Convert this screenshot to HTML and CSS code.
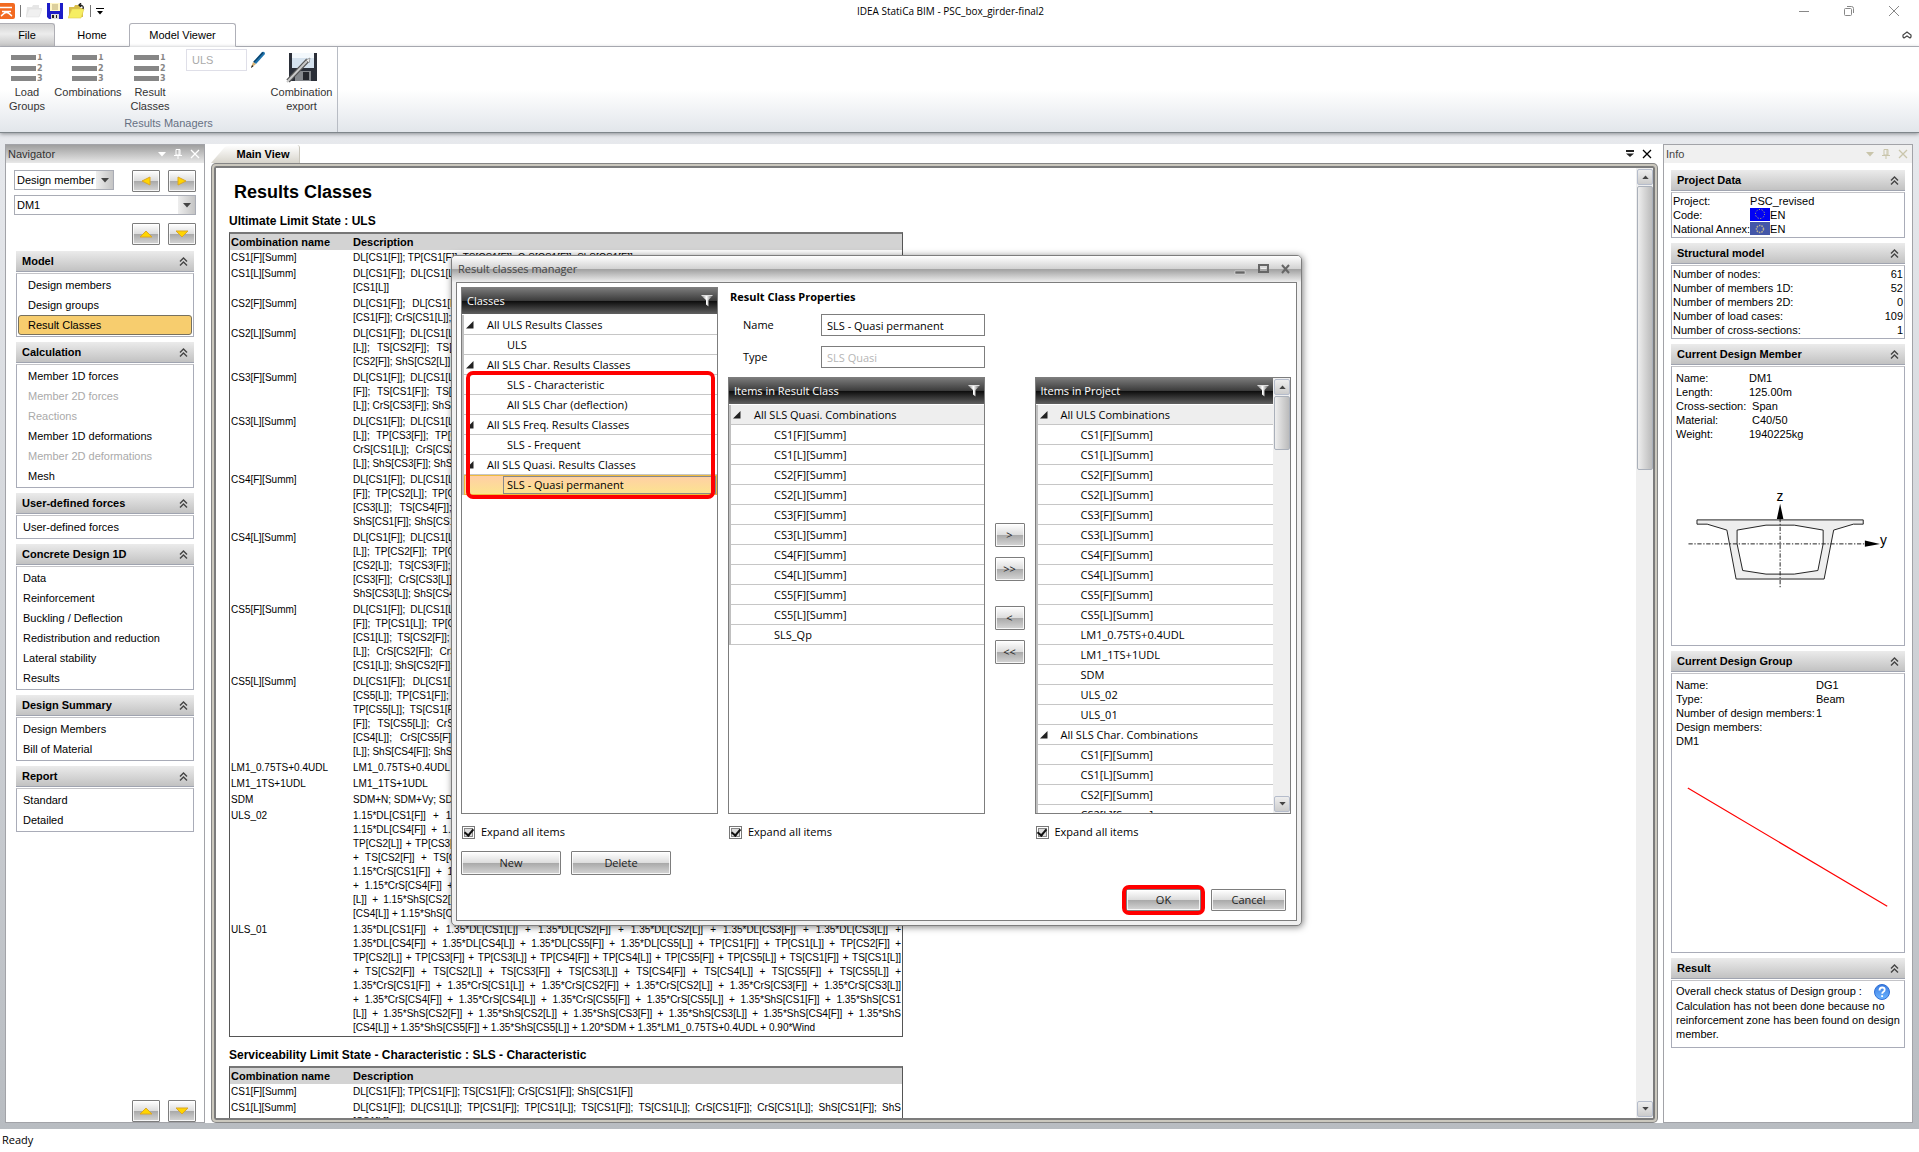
FILE: index.html
```html
<!DOCTYPE html>
<html lang="en">
<head>
  <meta charset="UTF-8" />
  <meta name="viewport" content="width=device-width, initial-scale=1.0"/>
  <title>IDEA StatiCa BIM - PSC_box_girder-final2</title>
  <link rel="stylesheet" href="styles.css">
</head>
<body>

  <!-- shared icons -->
  <svg class="defs" width="0" height="0" aria-hidden="true">
    <defs>
      <linearGradient id="funnel-fill" x1="0" x2="1" y1="0" y2="0">
        <stop offset="0" stop-color="#777"/><stop offset=".45" stop-color="#fff"/><stop offset="1" stop-color="#555"/>
      </linearGradient>
      <linearGradient id="help-fill" x1="0" x2="0" y1="0" y2="1">
        <stop offset="0" stop-color="#3a7be0"/><stop offset="1" stop-color="#6db4ff"/>
      </linearGradient>
    </defs>
    <symbol id="chevrons" viewBox="0 0 9 9"><path d="M1 4.5 4.5 1 8 4.5M1 8.5 4.5 5 8 8.5" fill="none" stroke="#444" stroke-width="1.4"/></symbol>
    <symbol id="funnel" viewBox="0 0 12 12"><path d="M0 .5h12L7.5 5v6.5L5 9.500V5z" fill="url(#funnel-fill)"/><path d="M.5.5h11" stroke="#ddd"/></symbol>
    <symbol id="node" viewBox="0 0 8 8"><path d="M7.500 0v7.500H0z" fill="#222"/></symbol>
    <symbol id="down" viewBox="0 0 8 5"><path d="M0 0h8L4 4.500z" fill="currentColor"/></symbol>
    <symbol id="up" viewBox="0 0 8 5"><path d="M0 5h8L4 .5z" fill="currentColor"/></symbol>
    <symbol id="pin" viewBox="0 0 8 10"><path d="M2 .5h4V6H2zM0 6.500h8M4 7v3M5 1v5" fill="none" stroke="currentColor"/></symbol>
    <symbol id="cross" viewBox="0 0 10 10"><path d="M1 1l8 8M9 1l-8 8" fill="none" stroke="currentColor" stroke-width="1.300"/></symbol>
    <symbol id="gold-left" viewBox="0 0 14 12"><path d="M11 2v8L3 6z" fill="#ffd500" stroke="#dba626"/></symbol>
    <symbol id="gold-right" viewBox="0 0 14 12"><path d="M3 2v8l8-4z" fill="#ffd500" stroke="#dba626"/></symbol>
    <symbol id="gold-up" viewBox="0 0 14 12"><path d="M1 9h12L7 3z" fill="#ffd500" stroke="#dba626"/></symbol>
    <symbol id="gold-down" viewBox="0 0 14 12"><path d="M1 3h12L7 9z" fill="#ffd500" stroke="#dba626"/></symbol>
    <symbol id="bars" viewBox="0 0 32 28"><path d="M0 1h25v5H0zM0 12h25v5H0zM0 22h25v5H0z" fill="#868686"/></symbol>
  </svg>

  <header class="titlebar">
    <div class="quick">
      <svg width="15" height="16" viewBox="0 0 15 16"><path d="M0 0h13q2 0 2 2v12q0 2-2 2H0z" fill="#f26a21"/><path d="M0 4.500h12M1 13c2-1 2.500-3.500 5.500-3.500s3.500 2.500 5.500 3.500M2 8.500h9" fill="none" stroke="#fff" stroke-width="1.600"/></svg>
      <span class="sep"></span>
      <svg width="16" height="16" viewBox="0 0 16 16"><path d="M1 4h5l1-2h6v3h3l-3 9H0z" fill="#e6e6e6"/><path d="M3 6h13l-3 8H0z" fill="#f0f0f0" stroke="#ddd" stroke-width=".5"/></svg>
      <svg width="16" height="16" viewBox="0 0 16 16"><path d="M0 0h16v16H2l-2-2z" fill="#1c1cc8"/><path d="M3 0h10v8H3z" fill="#fff6c8"/><path d="M5 2h6M5 4h6M5 6h6" stroke="#b9a870"/><path d="M4 11h8v5H4z" fill="#ddd"/><path d="M5 12h2v3H5z" fill="#222"/><path d="M9 12h1v3H9z" fill="#222"/></svg>
      <svg width="17" height="16" viewBox="0 0 17 16"><path d="M1 4h5l1-2h5v3h3v9H1z" fill="#d8bd4a"/><path d="M4 6h12l-3 9H0z" fill="#f6ee62" stroke="#e0cc50" stroke-width=".6"/><path d="M15 6c1-3-1-4-4-4M13 0l-2 2 2 2" fill="none" stroke="#222" stroke-width="1.300"/></svg>
      <span class="sep"></span>
      <svg width="8" height="7" viewBox="0 0 8 7"><path d="M0 .5h8" stroke="#000"/><path d="M1 3h6L4 6.500z"/></svg>
    </div>
    <div class="app-title">IDEA StatiCa BIM - PSC_box_girder-final2</div>
    <div class="win-buttons">
      <button aria-label="Minimize"><svg width="10" height="10"><path d="M0 5.500h10" stroke="#888"/></svg></button>
      <button aria-label="Restore"><svg width="10" height="10" fill="none" stroke="#888"><rect x=".5" y="2.500" width="7" height="7" rx="1"/><path d="M3 .5h4.500q2 0 2 2V7"/></svg></button>
      <button aria-label="Close"><svg width="10" height="10"><path d="M0 0l10 10M10 0L0 10" stroke="#888"/></svg></button>
    </div>
  </header>

  <nav class="tabs">
    <button class="tab file">File</button>
    <button class="tab home">Home</button>
    <button class="tab active">Model Viewer</button>
    <button class="collapse" aria-label="Collapse ribbon"><svg width="10" height="8" viewBox="0 0 10 8"><path d="M1 6V4l4-3 4 3v2L8 7 5 5 2 7z" fill="none" stroke="#444" stroke-width="1.200"/></svg></button>
  </nav>

  <section class="ribbon">
    <div class="group">
      <div class="group-items">
        <button class="tool tool-load"><svg width="32" height="28"><use href="#bars"/><g class="digits"><text x="26" y="6">1</text><text x="26" y="17">2</text><text x="26" y="27">3</text></g></svg>Load<br>Groups</button>
        <button class="tool tool-comb"><svg width="32" height="28"><use href="#bars"/><g class="digits"><text x="26" y="6">1</text><text x="26" y="17">2</text><text x="26" y="27">3</text></g></svg>Combinations</button>
        <button class="tool tool-result"><svg width="32" height="28"><use href="#bars"/><g class="digits"><text x="26" y="6">1</text><text x="26" y="17">2</text><text x="26" y="27">3</text></g></svg>Result<br>Classes</button>
        <input class="class-name" type="text" value="ULS" aria-label="Result class" disabled>
        <svg class="pencil" width="16" height="18" viewBox="0 0 16 18"><path d="M3 11 12 1q3-1 3 2L6 13z" fill="#1f74ad"/><path d="M4 11 13 1.500" stroke="#0d3f66" stroke-width="1.200"/><path d="M3 11l3 2-5 4z" fill="#d8b070"/><path d="M1 17l1-3 1.500 1.200z" fill="#222"/></svg>
        <button class="tool tool-export"><svg width="32" height="32" viewBox="0 0 32 32"><path d="M3 1h28v28H5l-2-2z" fill="#2b2f38"/><path d="M6 1h22v15H6z" fill="#d5e2ee"/><path d="M6 1h22v5H6z" fill="#f3f8fc"/><path d="M9 19h16v10H9z" fill="#85888c"/><path d="M17 20h6v8h-6z" fill="#25272c"/><path d="M2 29 22 8" stroke="#555" stroke-width="4.500"/><path d="M1 30 21 9" stroke="#c9c9c9" stroke-width="2"/><path d="M20 8l4-2-1 5z" fill="#eee" stroke="#777" stroke-width=".6"/></svg>Combination<br>export</button>
      </div>
      <div class="group-name">Results Managers</div>
    </div>
  </section>

  <main class="workspace">
    <aside class="panel navigator">
      <div class="panel-title">Navigator
        <span class="panel-icons"><svg width="8" height="5"><use href="#down"/></svg><svg width="8" height="10"><use href="#pin"/></svg><svg width="10" height="10"><use href="#cross"/></svg></span>
      </div>
      <div class="nav-controls">
        <div class="nav-line">
          <span class="combo combo-kind"><select aria-label="Item kind"><option>Design member</option></select><svg width="8" height="5"><use href="#down"/></svg></span>
          <button class="arrow" aria-label="Previous"><svg width="14" height="12"><use href="#gold-left"/></svg></button>
          <button class="arrow" aria-label="Next"><svg width="14" height="12"><use href="#gold-right"/></svg></button>
        </div>
        <span class="combo"><select aria-label="Design member"><option>DM1</option></select><svg width="8" height="5"><use href="#down"/></svg></span>
        <div class="nav-line">
          <button class="arrow" aria-label="Up"><svg width="14" height="12"><use href="#gold-up"/></svg></button>
          <button class="arrow" aria-label="Down"><svg width="14" height="12"><use href="#gold-down"/></svg></button>
        </div>
      </div>
      <div class="sections">
        <section class="section">
          <h2>Model <svg width="9" height="9"><use href="#chevrons"/></svg></h2>
          <div class="box links deep"><a href="#">Design members</a><a href="#">Design groups</a><a href="#" class="current">Result Classes</a></div>
        </section>
        <section class="section">
          <h2>Calculation <svg width="9" height="9"><use href="#chevrons"/></svg></h2>
          <div class="box links deep"><a href="#">Member 1D forces</a><a href="#" class="off">Member 2D forces</a><a href="#" class="off">Reactions</a><a href="#">Member 1D deformations</a><a href="#" class="off">Member 2D deformations</a><a href="#">Mesh</a></div>
        </section>
        <section class="section">
          <h2>User-defined forces <svg width="9" height="9"><use href="#chevrons"/></svg></h2>
          <div class="box links"><a href="#">User-defined forces</a></div>
        </section>
        <section class="section">
          <h2>Concrete Design 1D <svg width="9" height="9"><use href="#chevrons"/></svg></h2>
          <div class="box links"><a href="#">Data</a><a href="#">Reinforcement</a><a href="#">Buckling / Deflection</a><a href="#">Redistribution and reduction</a><a href="#">Lateral stability</a><a href="#">Results</a></div>
        </section>
        <section class="section">
          <h2>Design Summary <svg width="9" height="9"><use href="#chevrons"/></svg></h2>
          <div class="box links"><a href="#">Design Members</a><a href="#">Bill of Material</a></div>
        </section>
        <section class="section">
          <h2>Report <svg width="9" height="9"><use href="#chevrons"/></svg></h2>
          <div class="box links"><a href="#">Standard</a><a href="#">Detailed</a></div>
        </section>
      </div>
      <div class="nav-line nav-foot">
        <button class="arrow" aria-label="Scroll up"><svg width="14" height="12"><use href="#gold-up"/></svg></button>
        <button class="arrow" aria-label="Scroll down"><svg width="14" height="12"><use href="#gold-down"/></svg></button>
      </div>
    </aside>

    <div class="view">
      <div class="view-tabs">
        <button class="view-tab">Main View</button>
        <span class="view-icons"><svg width="8" height="7" viewBox="0 0 8 7"><path d="M0 1h8" stroke="#222" stroke-width="2"/><path d="M0 3.500h8L4 7z" fill="#222"/></svg><svg width="10" height="10"><use href="#cross"/></svg></span>
      </div>
      <div class="frame">
        <article class="report">
          <h1>Results Classes</h1>
          <h3>Ultimate Limit State : ULS</h3>
          <table>
            <thead><tr><th>Combination name</th><th>Description</th></tr></thead>
            <tbody>
              <tr><td>CS1[F][Summ]</td><td><span>DL[CS1[F]]; TP[CS1[F]]; TS[CS1[F]]; CrS[CS1[F]]; ShS[CS1[F]]</span></td></tr>
              <tr><td>CS1[L][Summ]</td><td><span>DL[CS1[F]]; DL[CS1[L]]; TP[CS1[F]]; TP[CS1[L]]; TS[CS1[F]]; TS[CS1[L]]; CrS[CS1[F]]; CrS[CS1[L]]; ShS[CS1[F]]; ShS</span><span>[CS1[L]]</span></td></tr>
              <tr><td>CS2[F][Summ]</td><td><span>DL[CS1[F]]; DL[CS1[L]]; DL[CS2[F]]; TP[CS1[F]]; TP[CS1[L]]; TP[CS2[F]]; TS[CS1[F]]; TS[CS1[L]]; TS[CS2[F]]; CrS</span><span>[CS1[F]]; CrS[CS1[L]]; CrS[CS2[F]]; ShS[CS1[F]]; ShS[CS1[L]]; ShS[CS2[F]]</span></td></tr>
              <tr><td>CS2[L][Summ]</td><td><span>DL[CS1[F]]; DL[CS1[L]]; DL[CS2[F]]; DL[CS2[L]]; TP[CS1[F]]; TP[CS1[L]]; TP[CS2[F]]; TP[CS2[L]]; TS[CS1[F]]; TS[CS1</span><span>[L]]; TS[CS2[F]]; TS[CS2[L]]; CrS[CS1[F]]; CrS[CS1[L]]; CrS[CS2[F]]; CrS[CS2[L]]; ShS[CS1[F]]; ShS[CS1[L]]; ShS</span><span>[CS2[F]]; ShS[CS2[L]]</span></td></tr>
              <tr><td>CS3[F][Summ]</td><td><span>DL[CS1[F]]; DL[CS1[L]]; DL[CS2[F]]; DL[CS2[L]]; DL[CS3[F]]; TP[CS1[F]]; TP[CS1[L]]; TP[CS2[F]]; TP[CS2[L]]; TP[CS3</span><span>[F]]; TS[CS1[F]]; TS[CS1[L]]; TS[CS2[F]]; TS[CS2[L]]; TS[CS3[F]]; CrS[CS1[F]]; CrS[CS1[L]]; CrS[CS2[F]]; CrS[CS2</span><span>[L]]; CrS[CS3[F]]; ShS[CS1[F]]; ShS[CS1[L]]; ShS[CS2[F]]; ShS[CS2[L]]; ShS[CS3[F]]</span></td></tr>
              <tr><td>CS3[L][Summ]</td><td><span>DL[CS1[F]]; DL[CS1[L]]; DL[CS2[F]]; DL[CS2[L]]; DL[CS3[F]]; DL[CS3[L]]; TP[CS1[F]]; TP[CS1[L]]; TP[CS2[F]]; TP[CS2</span><span>[L]]; TP[CS3[F]]; TP[CS3[L]]; TS[CS1[F]]; TS[CS1[L]]; TS[CS2[F]]; TS[CS2[L]]; TS[CS3[F]]; TS[CS3[L]]; CrS[CS1[F]];</span><span>CrS[CS1[L]]; CrS[CS2[F]]; CrS[CS2[L]]; CrS[CS3[F]]; CrS[CS3[L]]; ShS[CS1[F]]; ShS[CS1[L]]; ShS[CS2[F]]; ShS[CS2</span><span>[L]]; ShS[CS3[F]]; ShS[CS3[L]]</span></td></tr>
              <tr><td>CS4[F][Summ]</td><td><span>DL[CS1[F]]; DL[CS1[L]]; DL[CS2[F]]; DL[CS2[L]]; DL[CS3[F]]; DL[CS3[L]]; DL[CS4[F]]; TP[CS1[F]]; TP[CS1[L]]; TP[CS2</span><span>[F]]; TP[CS2[L]]; TP[CS3[F]]; TP[CS3[L]]; TP[CS4[F]]; TS[CS1[F]]; TS[CS1[L]]; TS[CS2[F]]; TS[CS2[L]]; TS[CS3[F]]; TS</span><span>[CS3[L]]; TS[CS4[F]]; CrS[CS1[F]]; CrS[CS1[L]]; CrS[CS2[F]]; CrS[CS2[L]]; CrS[CS3[F]]; CrS[CS3[L]]; CrS[CS4[F]];</span><span>ShS[CS1[F]]; ShS[CS1[L]]; ShS[CS2[F]]; ShS[CS2[L]]; ShS[CS3[F]]; ShS[CS4[F]]</span></td></tr>
              <tr><td>CS4[L][Summ]</td><td><span>DL[CS1[F]]; DL[CS1[L]]; DL[CS2[F]]; DL[CS2[L]]; DL[CS3[F]]; DL[CS3[L]]; DL[CS4[F]]; DL[CS4[L]]; TP[CS1[F]]; TP[CS1</span><span>[L]]; TP[CS2[F]]; TP[CS2[L]]; TP[CS3[F]]; TP[CS3[L]]; TP[CS4[F]]; TP[CS4[L]]; TS[CS1[F]]; TS[CS1[L]]; TS[CS2[F]]; TS</span><span>[CS2[L]]; TS[CS3[F]]; TS[CS3[L]]; TS[CS4[F]]; TS[CS4[L]]; CrS[CS1[F]]; CrS[CS1[L]]; CrS[CS2[F]]; CrS[CS2[L]]; CrS</span><span>[CS3[F]]; CrS[CS3[L]]; CrS[CS4[F]]; CrS[CS4[L]]; ShS[CS1[F]]; ShS[CS1[L]]; ShS[CS2[F]]; ShS[CS2[L]]; ShS[CS3[F]];</span><span>ShS[CS3[L]]; ShS[CS4[F]]; ShS[CS4[L]]</span></td></tr>
              <tr><td>CS5[F][Summ]</td><td><span>DL[CS1[F]]; DL[CS1[L]]; DL[CS2[F]]; DL[CS2[L]]; DL[CS3[F]]; DL[CS3[L]]; DL[CS4[F]]; DL[CS4[L]]; DL[CS5[F]]; TP[CS1</span><span>[F]]; TP[CS1[L]]; TP[CS2[F]]; TP[CS2[L]]; TP[CS3[F]]; TP[CS3[L]]; TP[CS4[F]]; TP[CS4[L]]; TP[CS5[F]]; TS[CS1[F]]; TS</span><span>[CS1[L]]; TS[CS2[F]]; TS[CS2[L]]; TS[CS3[F]]; TS[CS3[L]]; TS[CS4[F]]; TS[CS4[L]]; TS[CS5[F]]; CrS[CS1[F]]; CrS[CS1</span><span>[L]]; CrS[CS2[F]]; CrS[CS2[L]]; CrS[CS3[F]]; CrS[CS3[L]]; CrS[CS4[F]]; CrS[CS4[L]]; CrS[CS5[F]]; ShS[CS1[F]]; ShS</span><span>[CS1[L]]; ShS[CS2[F]]; ShS[CS2[L]]; ShS[CS3[F]]; ShS[CS4[F]]; ShS[CS5[F]]</span></td></tr>
              <tr><td>CS5[L][Summ]</td><td><span>DL[CS1[F]]; DL[CS1[L]]; DL[CS2[F]]; DL[CS2[L]]; DL[CS3[F]]; DL[CS3[L]]; DL[CS4[F]]; DL[CS4[L]]; DL[CS5[F]]; DL</span><span>[CS5[L]]; TP[CS1[F]]; TP[CS1[L]]; TP[CS2[F]]; TP[CS2[L]]; TP[CS3[F]]; TP[CS3[L]]; TP[CS4[F]]; TP[CS4[L]]; TP[CS5[F]];</span><span>TP[CS5[L]]; TS[CS1[F]]; TS[CS1[L]]; TS[CS2[F]]; TS[CS2[L]]; TS[CS3[F]]; TS[CS3[L]]; TS[CS4[F]]; TS[CS4[L]]; TS[CS5</span><span>[F]]; TS[CS5[L]]; CrS[CS1[F]]; CrS[CS1[L]]; CrS[CS2[F]]; CrS[CS2[L]]; CrS[CS3[F]]; CrS[CS3[L]]; CrS[CS4[F]]; CrS</span><span>[CS4[L]]; CrS[CS5[F]]; CrS[CS5[L]]; ShS[CS1[F]]; ShS[CS1[L]]; ShS[CS2[F]]; ShS[CS2[L]]; ShS[CS3[F]]; ShS[CS3</span><span>[L]]; ShS[CS4[F]]; ShS[CS4[L]]; ShS[CS5[F]]; ShS[CS5[L]]</span></td></tr>
              <tr><td>LM1_0.75TS+0.4UDL</td><td><span>LM1_0.75TS+0.4UDL</span></td></tr>
              <tr><td>LM1_1TS+1UDL</td><td><span>LM1_1TS+1UDL</span></td></tr>
              <tr><td>SDM</td><td><span>SDM+N; SDM+Vy; SDM+Vz; SDM+Mx; SDM+My; SDM+Mz</span></td></tr>
              <tr><td>ULS_02</td><td><span>1.15*DL[CS1[F]] + 1.15*DL[CS1[L]] + 1.15*DL[CS2[F]] + 1.15*DL[CS2[L]] + 1.15*DL[CS3[F]] + 1.15*DL[CS3[L]] +</span><span>1.15*DL[CS4[F]] + 1.15*DL[CS4[L]] + 1.15*DL[CS5[F]] + 1.15*DL[CS5[L]] + TP[CS1[F]] + TP[CS1[L]] + TP[CS2[F]] +</span><span>TP[CS2[L]] + TP[CS3[F]] + TP[CS3[L]] + TP[CS4[F]] + TP[CS4[L]] + TP[CS5[F]] + TP[CS5[L]] + TS[CS1[F]] + TS[CS1[L]]</span><span>+ TS[CS2[F]] + TS[CS2[L]] + TS[CS3[F]] + TS[CS3[L]] + TS[CS4[F]] + TS[CS4[L]] + TS[CS5[F]] + TS[CS5[L]] +</span><span>1.15*CrS[CS1[F]] + 1.15*CrS[CS1[L]] + 1.15*CrS[CS2[F]] + 1.15*CrS[CS2[L]] + 1.15*CrS[CS3[F]] + 1.15*CrS[CS3[L]]</span><span>+ 1.15*CrS[CS4[F]] + 1.15*CrS[CS4[L]] + 1.15*CrS[CS5[F]] + 1.15*CrS[CS5[L]] + 1.15*ShS[CS1[F]] + 1.15*ShS[CS1</span><span>[L]] + 1.15*ShS[CS2[F]] + 1.15*ShS[CS2[L]] + 1.15*ShS[CS3[F]] + 1.15*ShS[CS3[L]] + 1.15*ShS[CS4[F]] + 1.15*ShS</span><span>[CS4[L]] + 1.15*ShS[CS5[F]] + 1.15*ShS[CS5[L]] + 1.20*SDM + 1.35*LM1_1TS+1UDL</span></td></tr>
              <tr><td>ULS_01</td><td><span>1.35*DL[CS1[F]] + 1.35*DL[CS1[L]] + 1.35*DL[CS2[F]] + 1.35*DL[CS2[L]] + 1.35*DL[CS3[F]] + 1.35*DL[CS3[L]] +</span><span>1.35*DL[CS4[F]] + 1.35*DL[CS4[L]] + 1.35*DL[CS5[F]] + 1.35*DL[CS5[L]] + TP[CS1[F]] + TP[CS1[L]] + TP[CS2[F]] +</span><span>TP[CS2[L]] + TP[CS3[F]] + TP[CS3[L]] + TP[CS4[F]] + TP[CS4[L]] + TP[CS5[F]] + TP[CS5[L]] + TS[CS1[F]] + TS[CS1[L]]</span><span>+ TS[CS2[F]] + TS[CS2[L]] + TS[CS3[F]] + TS[CS3[L]] + TS[CS4[F]] + TS[CS4[L]] + TS[CS5[F]] + TS[CS5[L]] +</span><span>1.35*CrS[CS1[F]] + 1.35*CrS[CS1[L]] + 1.35*CrS[CS2[F]] + 1.35*CrS[CS2[L]] + 1.35*CrS[CS3[F]] + 1.35*CrS[CS3[L]]</span><span>+ 1.35*CrS[CS4[F]] + 1.35*CrS[CS4[L]] + 1.35*CrS[CS5[F]] + 1.35*CrS[CS5[L]] + 1.35*ShS[CS1[F]] + 1.35*ShS[CS1</span><span>[L]] + 1.35*ShS[CS2[F]] + 1.35*ShS[CS2[L]] + 1.35*ShS[CS3[F]] + 1.35*ShS[CS3[L]] + 1.35*ShS[CS4[F]] + 1.35*ShS</span><span>[CS4[L]] + 1.35*ShS[CS5[F]] + 1.35*ShS[CS5[L]] + 1.20*SDM + 1.35*LM1_0.75TS+0.4UDL + 0.90*Wind</span></td></tr>
            </tbody>
          </table>
          <h3>Serviceability Limit State - Characteristic : SLS - Characteristic</h3>
          <table>
            <thead><tr><th>Combination name</th><th>Description</th></tr></thead>
            <tbody>
              <tr><td>CS1[F][Summ]</td><td><span>DL[CS1[F]]; TP[CS1[F]]; TS[CS1[F]]; CrS[CS1[F]]; ShS[CS1[F]]</span></td></tr>
              <tr><td>CS1[L][Summ]</td><td><span>DL[CS1[F]]; DL[CS1[L]]; TP[CS1[F]]; TP[CS1[L]]; TS[CS1[F]]; TS[CS1[L]]; CrS[CS1[F]]; CrS[CS1[L]]; ShS[CS1[F]]; ShS</span><span>[CS1[L]]</span></td></tr>
            </tbody>
          </table>
        </article>
        <div class="scroll">
          <button aria-label="Scroll up"><svg width="7" height="4"><use href="#up"/></svg></button>
          <div class="thumb view-thumb"></div>
          <button class="last" aria-label="Scroll down"><svg width="7" height="4"><use href="#down"/></svg></button>
        </div>
      </div>
    </div>

    <aside class="panel info">
      <div class="panel-title">Info
        <span class="panel-icons"><svg width="8" height="5"><use href="#down"/></svg><svg width="8" height="10"><use href="#pin"/></svg><svg width="10" height="10"><use href="#cross"/></svg></span>
      </div>
      <div class="sections">
        <section class="section">
          <h2>Project Data <svg width="9" height="9"><use href="#chevrons"/></svg></h2>
          <dl class="box facts">
            <dt>Project:</dt><dd>PSC_revised</dd>
            <dt>Code:</dt><dd><svg class="flag" width="20" height="13"><rect width="20" height="13" fill="#0000f5"/><circle cx="10" cy="6" r="4.500" fill="none" stroke="#d8d84a" stroke-dasharray="1 1.800"/></svg>EN</dd>
            <dt>National Annex:</dt><dd><svg class="flag" width="20" height="13"><rect width="20" height="13" fill="#4356a8"/><circle cx="10" cy="7" r="3.500" fill="none" stroke="#b9b391" stroke-width="1.500" stroke-dasharray="1.500 1"/></svg>EN</dd>
          </dl>
        </section>
        <section class="section">
          <h2>Structural model <svg width="9" height="9"><use href="#chevrons"/></svg></h2>
          <dl class="box facts counts">
            <dt>Number of nodes:</dt><dd>61</dd>
            <dt>Number of members 1D:</dt><dd>52</dd>
            <dt>Number of members 2D:</dt><dd>0</dd>
            <dt>Number of load cases:</dt><dd>109</dd>
            <dt>Number of cross-sections:</dt><dd>1</dd>
          </dl>
        </section>
        <section class="section">
          <h2>Current Design Member <svg width="9" height="9"><use href="#chevrons"/></svg></h2>
          <div class="box drawing">
            <dl class="facts member">
              <dt>Name:</dt><dd>DM1</dd>
              <dt>Length:</dt><dd>125.00m</dd>
              <dt>Cross-section:</dt><dd>&nbsp;Span</dd>
              <dt>Material:</dt><dd>&nbsp;C40/50</dd>
              <dt>Weight:</dt><dd>1940225kg</dd>
            </dl>
            <svg class="girder" viewBox="215 1050 700 310">
              <path d="M288 1141H794V1154H764L704 1172L675 1321H407L379 1172L319 1154H288z" fill="#eee" stroke="#222" stroke-width="3"/>
              <path d="M410 1172L498 1157H584L672 1172V1214L656 1295L584 1306H498L427 1295L410 1214z" fill="#fff" stroke="#222" stroke-width="3"/>
              <path d="M262 1214H800M541 1135V1350" stroke="#222" stroke-width="3" stroke-dasharray="13 5 4 5"/>
              <path d="M541 1092L551 1138H531zM845 1214L799 1204V1223z"/>
              <text x="530" y="1083" font-size="42">z</text><text x="845" y="1217" font-size="42">y</text>
            </svg>
          </div>
        </section>
        <section class="section">
          <h2>Current Design Group <svg width="9" height="9"><use href="#chevrons"/></svg></h2>
          <div class="box drawing">
            <dl class="facts design-group">
              <dt>Name:</dt><dd>DG1</dd>
              <dt>Type:</dt><dd>Beam</dd>
              <dt>Number of design members:</dt><dd>1</dd>
              <dt>Design members:</dt><dd></dd>
              <dt>DM1</dt><dd></dd>
            </dl>
            <svg class="beam" viewBox="0 0 233 140"><path d="M15 8 217 128" stroke="#f00" stroke-width="1.200"/></svg>
          </div>
        </section>
        <section class="section">
          <h2>Result <svg width="9" height="9"><use href="#chevrons"/></svg></h2>
          <div class="box result">
            <div class="status">Overall check status of Design group :
              <svg width="16" height="16" viewBox="0 0 16 16"><circle cx="8" cy="8" r="7.500" fill="url(#help-fill)" stroke="#2f6fd6"/><path d="M5.500 6.500q0-3 2.700-3 2.500 0 2.500 2.300 0 1.500-1.500 2.200-1 .6-1 1.700M8.100 11.200v1.800" fill="none" stroke="#fff" stroke-width="1.800"/></svg>
            </div>
            <p>Calculation has not been done because no reinforcement zone has been found on design member.</p>
          </div>
        </section>
      </div>
    </aside>
  </main>

  <footer class="statusbar">Ready</footer>

  <div class="dialog" role="dialog" aria-labelledby="dlg-title">
    <div class="dlg-title">
      <span id="dlg-title">Result classes manager</span>
      <div class="dlg-buttons">
        <button aria-label="Minimize"><svg width="12" height="12"><path d="M1 8h10v3H1z" fill="#666" stroke="#eee" stroke-width=".5"/></svg></button>
        <button aria-label="Maximize"><svg width="12" height="12" fill="none" stroke="#666" stroke-width="2"><rect x="2" y="2" width="9" height="7"/><path d="M4 5.500h5" stroke="#eee" stroke-width="1"/></svg></button>
        <button aria-label="Close"><svg width="12" height="12"><path d="M2 2l7 8M9 2l-7 8" stroke="#666" stroke-width="2"/></svg></button>
      </div>
    </div>
    <div class="dlg-body">
      <div class="columns">
        <div class="classes">
          <div class="list">
            <div class="list-main">
              <div class="list-head">Classes <svg width="12" height="12"><use href="#funnel"/></svg></div>
              <ul>
                <li class="parent"><svg width="8" height="8"><use href="#node"/></svg>All ULS Results Classes</li>
                <li>ULS</li>
                <li class="parent"><svg width="8" height="8"><use href="#node"/></svg>All SLS Char. Results Classes</li>
                <li>SLS - Characteristic</li>
                <li>All SLS Char (deflection)</li>
                <li class="parent"><svg width="8" height="8"><use href="#node"/></svg>All SLS Freq. Results Classes</li>
                <li>SLS - Frequent</li>
                <li class="parent"><svg width="8" height="8"><use href="#node"/></svg>All SLS Quasi. Results Classes</li>
                <li class="selected"><span>SLS - Quasi permanent</span></li>
              </ul>
              <div class="mark mark-classes"></div>
            </div>
          </div>
          <label class="expand"><input type="checkbox" checked>Expand all items</label>
          <div class="edit"><button class="push">New</button><button class="push">Delete</button></div>
        </div>

        <div class="props">
          <h4>Result Class Properties</h4>
          <div class="fields">
            <div class="field"><label for="rc-name">Name</label><input id="rc-name" type="text" value="SLS - Quasi permanent"></div>
            <div class="field"><label for="rc-type">Type</label><input id="rc-type" type="text" value="SLS Quasi" disabled></div>
          </div>
          <div class="transfer">
            <div class="pick">
              <div class="list">
                <div class="list-main">
                  <div class="list-head">Items in Result Class <svg width="12" height="12"><use href="#funnel"/></svg></div>
                  <ul>
                    <li class="parent focus"><svg width="8" height="8"><use href="#node"/></svg>All SLS Quasi. Combinations</li>
                    <li>CS1[F][Summ]</li><li>CS1[L][Summ]</li><li>CS2[F][Summ]</li><li>CS2[L][Summ]</li><li>CS3[F][Summ]</li><li>CS3[L][Summ]</li><li>CS4[F][Summ]</li><li>CS4[L][Summ]</li><li>CS5[F][Summ]</li><li>CS5[L][Summ]</li><li>SLS_Qp</li>
                  </ul>
                </div>
              </div>
              <label class="expand"><input type="checkbox" checked>Expand all items</label>
            </div>
            <div class="movers">
              <button class="push">&gt;</button><button class="push">&gt;&gt;</button>
              <button class="push apart">&lt;</button><button class="push">&lt;&lt;</button>
            </div>
            <div class="pick">
              <div class="list">
                <div class="list-main">
                  <div class="list-head">Items in Project <svg width="12" height="12"><use href="#funnel"/></svg></div>
                  <ul>
                    <li class="parent focus"><svg width="8" height="8"><use href="#node"/></svg>All ULS Combinations</li>
                    <li>CS1[F][Summ]</li><li>CS1[L][Summ]</li><li>CS2[F][Summ]</li><li>CS2[L][Summ]</li><li>CS3[F][Summ]</li><li>CS3[L][Summ]</li><li>CS4[F][Summ]</li><li>CS4[L][Summ]</li><li>CS5[F][Summ]</li><li>CS5[L][Summ]</li><li>LM1_0.75TS+0.4UDL</li><li>LM1_1TS+1UDL</li><li>SDM</li><li>ULS_02</li><li>ULS_01</li>
                    <li class="parent"><svg width="8" height="8"><use href="#node"/></svg>All SLS Char. Combinations</li>
                    <li>CS1[F][Summ]</li><li>CS1[L][Summ]</li><li>CS2[F][Summ]</li><li>CS2[L][Summ]</li>
                  </ul>
                </div>
                <div class="scroll">
                  <button aria-label="Scroll up"><svg width="7" height="4"><use href="#up"/></svg></button>
                  <div class="thumb"></div>
                  <button class="last" aria-label="Scroll down"><svg width="7" height="4"><use href="#down"/></svg></button>
                </div>
              </div>
              <label class="expand"><input type="checkbox" checked>Expand all items</label>
            </div>
          </div>
        </div>
      </div>
      <div class="actions">
        <span class="ok-wrap"><button class="push">OK</button><span class="mark mark-ok"></span></span>
        <button class="push">Cancel</button>
      </div>
    </div>
  </div>

</body>
</html>
```
FILE: styles.css
```css
* {
  box-sizing: border-box;
}

body {
  margin: 0;
  height: 100vh;
  display: flex;
  flex-direction: column;
  overflow: hidden;
  background: #fff;
  color: #000;
  font-family: "Liberation Sans", Arial, sans-serif;
  font-size: 11px;
  line-height: 14px;
}

button, input, select {
  font: inherit;
  color: inherit;
  margin: 0;
  padding: 0;
}

button {
  border: none;
  background: none;
}

svg {
  display: block;
  flex: none;
}

h1, h2, h3, h4, p, ul, dl, dd {
  margin: 0;
  padding: 0;
}

.defs {
  position: absolute;
}

.digits {
  font-family: "DejaVu Sans", sans-serif;
  font-size: 8px;
  font-weight: bold;
  fill: #868686;
}

/* title bar */
.titlebar {
  display: grid;
  grid-template-columns: 1fr auto 1fr;
  align-items: center;
  height: 22px;
  padding-right: 20px;
}

.quick {
  display: flex;
  align-items: center;
  gap: 5px;
}

.sep {
  width: 1px;
  height: 12px;
  background: #777;
}

.app-title, .statusbar {
  font-family: "Open Sans", "Noto Sans", sans-serif;
}

.app-title {
  padding-left: 2px;
  font-size: 10px;
}

.win-buttons {
  display: flex;
  justify-content: flex-end;
  gap: 35px;
}

/* ribbon */
.tabs {
  display: flex;
  height: 25px;
  padding-top: 1px;
  border-bottom: 1px solid #afb0b8;
}

.tab.file {
  width: 55px;
  border: 1px solid #aeaeb4;
  border-left: none;
  border-bottom: none;
  border-radius: 0 3px 0 0;
  background: linear-gradient(#d2d2d2, #ececec 45%, #c6c6c6);
}

.tab.home {
  width: 74px;
}

.tab.active {
  width: 107px;
  height: 24px;
  border: 1px solid #afb0b8;
  border-bottom-color: #fff;
  border-radius: 3px 3px 0 0;
  background: #fff;
}

.collapse {
  margin-left: auto;
  padding-right: 7px;
}

.ribbon {
  flex: none;
  height: 86px;
  border-bottom: 1px solid #7f868b;
  background: linear-gradient(#fff 50%, #e2e6eb);
  display: flex;
  position: relative;
  box-shadow: 0 1px 4px #8a8d92;
}

.group {
  border-right: 1px solid #b8bcc4;
  display: flex;
  flex-direction: column;
  color: #333;
}

.group-items {
  flex: 1;
  display: flex;
  align-items: flex-start;
  padding-top: 2px;
}

.tool {
  display: flex;
  flex-direction: column;
  align-items: center;
  padding-top: 5px;
  gap: 3px;
}

.tool-load {
  width: 54px;
}

.tool-comb {
  width: 68px;
}

.tool-result {
  width: 56px;
}

.class-name {
  width: 61px;
  height: 22px;
  margin-left: 8px;
  padding-left: 5px;
  border: 1px solid #dfdfe8;
  background: #fff;
  color: #aaa;
}

.pencil {
  margin: 2px 0 0 3px;
}

.tool-export {
  width: 71px;
  padding-top: 3px;
  gap: 1px;
}

.group-name {
  height: 16px;
  text-align: center;
  color: #667083;
}

/* workspace */
.workspace {
  flex: 1;
  min-height: 0;
  display: flex;
  padding: 11px 6px 6px 5px;
  background: linear-gradient(#e7e9ed, #b8bcc1);
}

.panel {
  display: flex;
  flex-direction: column;
  border: 1px solid #a2a3a8;
  background: #fff;
}

.panel-title {
  height: 18px;
  padding: 0 4px 0 2px;
  display: flex;
  justify-content: space-between;
  align-items: center;
}

.panel-icons {
  display: flex;
  align-items: center;
  gap: 8px;
}

.navigator {
  width: 200px;
  flex: none;
}

.navigator .panel-title {
  background: linear-gradient(#9f9f9f, #e8e8e8);
  color: #333;
}

.navigator .panel-icons {
  color: #fff;
}

.info {
  width: 250px;
  flex: none;
}

.info .panel-title {
  background: #f0f0f0;
  color: #444;
}

.info .panel-icons {
  color: #c9c5ab;
}

.nav-controls {
  display: flex;
  flex-direction: column;
  padding: 7px 8px 6px;
}

.nav-line {
  display: flex;
  justify-content: flex-end;
  gap: 8px;
}

.nav-controls .nav-line:last-child {
  margin-top: 8px;
}

.nav-foot {
  margin-top: auto;
  padding-right: 8px;
}

.combo {
  position: relative;
  display: flex;
  width: 100%;
  margin-top: 3px;
}

.combo-kind {
  width: 100px;
  margin: 0 auto 0 0;
}

.combo select {
  appearance: none;
  flex: 1;
  min-width: 0;
  height: 20px;
  padding-left: 2px;
  border: 1px solid #a9acb5;
  border-radius: 0;
  background: linear-gradient(90deg, #eee, #c4c4c4) right / 17px 100% no-repeat #fff;
}

.combo svg {
  position: absolute;
  right: 5px;
  top: 8px;
  color: #444;
  pointer-events: none;
}

.arrow {
  width: 28px;
  height: 22px;
  display: grid;
  place-items: center;
}

.arrow, .push {
  border: 1px solid #7d7d7d;
  border-radius: 1px;
  background: linear-gradient(#fff, #dcdcdc 50%, #a8a8a8 50%, #d6d6d6);
  box-shadow: inset 0 0 0 1px rgba(255, 255, 255, 0.8);
}

.sections {
  padding: 0 10px;
  display: flex;
  flex-direction: column;
  gap: 5px;
}

.info .sections {
  padding: 7px 7px 0;
}

.section h2 {
  height: 21px;
  margin-bottom: 1px;
  padding: 0 6px;
  display: flex;
  justify-content: space-between;
  align-items: center;
  font-size: 11px;
  border-bottom: 1px solid #a0a4b0;
  background: linear-gradient(#ebebeb, #c2c2c2);
}

.box {
  border: 1px solid #a9acb8;
  border-top-color: #c4c4c8;
  padding: 1px;
}

.links a {
  display: block;
  height: 20px;
  padding-left: 5px;
  line-height: 20px;
  color: #000;
  text-decoration: none;
}

.links.deep a {
  padding-left: 10px;
}

.links a.off {
  color: #aaa;
}

.links a.current {
  padding-left: 9px;
  border: 1px solid #77715f;
  border-radius: 3px;
  background: #f7cd6e;
  line-height: 18px;
}

.facts {
  display: grid;
  grid-template-columns: auto 1fr;
}

.facts dd {
  display: flex;
  height: 14px;
}

.counts dd {
  justify-content: flex-end;
}

.member {
  grid-template-columns: 73px 1fr;
}

.design-group {
  grid-template-columns: 140px 1fr;
}

.drawing {
  height: 280px;
}

.drawing .facts {
  padding: 3px;
}

.girder {
  width: 100%;
  margin-top: 46px;
}

.beam {
  width: 100%;
  margin-top: 29px;
}

.result {
  height: 68px;
  padding: 3px 4px;
}

.status {
  display: flex;
  gap: 12px;
  height: 15px;
}

/* main view */
.view {
  flex: 1;
  min-width: 0;
  display: flex;
  flex-direction: column;
  padding: 0 5px 0 6px;
  background: #fff;
}

.view-tabs {
  height: 19px;
  display: flex;
  justify-content: space-between;
}

.view-tab {
  width: 89px;
  padding-left: 16px;
  margin-top: 1px;
  border-right: 1px solid #c8c5bb;
  border-radius: 0 3px 0 0;
  background: linear-gradient(#fff, #d8d5cc);
  clip-path: polygon(0 100%, 14px 10%, 20px 0, 100% 0, 100% 100%);
  font-weight: bold;
}

.view-icons {
  display: flex;
  align-items: center;
  gap: 8px;
  padding-right: 6px;
}

.frame {
  flex: 1;
  min-height: 0;
  display: flex;
  border: 2px solid #7c7c7c;
  outline: 2px solid #cbc8be;
  outline-offset: 0;
  box-shadow: 0 0 0 3px #858585;
  margin: 3px;
  border-radius: 2px;
}

.report {
  flex: 1;
  min-width: 0;
  overflow: hidden;
  padding: 13px 0 0 13px;
}

.report h1 {
  padding-left: 5px;
  font-size: 18px;
  line-height: 22px;
}

.report h3 {
  margin: 11px 0 4px;
  font-size: 12px;
  line-height: 14px;
}

.report table {
  width: 674px;
  border: 1px solid #555;
  border-top: 2px solid #777;
  border-collapse: separate;
  border-spacing: 0;
  table-layout: fixed;
  font-size: 10px;
}

.report th, .report td {
  padding: 1px;
  text-align: left;
  vertical-align: top;
}

.report th {
  background: #d3d3d3;
  font-size: 11px;
}

.report th:first-child {
  width: 122px;
}

.report td span {
  display: block;
  white-space: nowrap;
  text-align-last: justify;
}

.report td span:last-child {
  text-align-last: left;
}

.scroll {
  width: 17px;
  flex: none;
  display: flex;
  flex-direction: column;
  gap: 1px;
  padding: 1px 0 1px 1px;
  background: #efefef;
}

.scroll button {
  height: 16px;
  display: grid;
  place-items: center;
  border: 1px solid #b5bccb;
  border-radius: 2px;
  background: linear-gradient(#eee, #ccc);
  color: #444;
}

.scroll .last {
  margin-top: auto;
}

.thumb {
  height: 54px;
  border: 1px solid #aab0ba;
  border-radius: 2px;
  background: linear-gradient(90deg, #eee, #bbb);
}

.view-thumb {
  height: 284px;
}

.statusbar {
  height: 23px;
  padding-left: 2px;
  line-height: 22px;
}

/* result classes manager */
.dialog {
  position: absolute;
  left: 451px;
  top: 255px;
  width: 851px;
  height: 671px;
  display: flex;
  flex-direction: column;
  padding: 0 4px 4px;
  border: 1px solid #7d7d7d;
  border-radius: 5px;
  background: #f0f0f0;
  box-shadow: 1px 1px 7px rgba(0, 0, 0, 0.5);
  font-family: "Open Sans", "Noto Sans", sans-serif;
}

.dlg-title {
  height: 26px;
  margin: 0 -4px;
  padding: 0 9px 0 6px;
  display: flex;
  justify-content: space-between;
  align-items: center;
  border-radius: 4px 4px 0 0;
  background: linear-gradient(#fff, #d2d2d2 50%, #a2a2a2 52%, #eee);
  color: #444;
}

.dlg-buttons {
  display: flex;
  gap: 11px;
}

.dlg-body {
  flex: 1;
  display: flex;
  flex-direction: column;
  padding: 4px 5px 9px 4px;
  border: 1px solid #7d7d7d;
  background: #fff;
}

.columns {
  display: flex;
  gap: 10px;
}

.classes {
  flex: 0 0 257px;
}

.props {
  flex: 1;
}

.list {
  height: 527px;
  display: flex;
  border: 1px solid #7d7d7d;
  overflow: hidden;
}

.props .list {
  height: 437px;
}

.list-main {
  flex: 1;
  position: relative;
}

.list-head {
  height: 26px;
  padding: 0 4px 0 5px;
  display: flex;
  justify-content: space-between;
  align-items: center;
  background: linear-gradient(#7a7a7a, #3d3d3d 48%, #0c0c0c 50%, #606060);
  color: #fff;
}

.list ul {
  list-style: none;
  padding-top: 1px;
}

.list li {
  height: 20px;
  padding-left: 43px;
  margin-left: 2px;
  line-height: 20px;
  border-bottom: 1px solid #c6c6c6;
  box-shadow: -2px 0 #c0c0c0;
}

.list li.parent {
  display: flex;
  align-items: center;
  gap: 13px;
  padding-left: 2px;
}

.list li.focus {
  background: #eee;
}

.list li.selected {
  padding-left: 38px;
  border: 1px solid #efbb3f;
  background: linear-gradient(#ffcfa5, #fbe48f);
  line-height: 18px;
}

.selected span {
  display: block;
  padding-left: 3px;
  border: 1px solid #888;
  line-height: 16px;
}

.expand {
  display: flex;
  align-items: center;
  gap: 6px;
  height: 14px;
  margin: 11px 0 12px 1px;
}

.expand input {
  appearance: none;
  width: 13px;
  height: 13px;
  display: grid;
  place-items: center;
  border: 1px solid #777;
  background: #ddd;
  box-shadow: inset 0 0 0 1px #fff, inset 0 0 0 2px #888;
}

.expand input:checked::before {
  content: "";
  width: 4px;
  height: 7px;
  margin-top: -2px;
  border: solid #111;
  border-width: 0 2px 2px 0;
  rotate: 40deg;
}

.edit {
  display: flex;
  gap: 10px;
}

.push {
  height: 24px;
  color: #222;
}

.edit .push {
  width: 100px;
}

.props h4 {
  padding-left: 2px;
  line-height: 20px;
  font-size: 11px;
}

.fields {
  display: flex;
  flex-direction: column;
  gap: 10px;
  padding: 7px 0 9px 15px;
}

.field {
  display: flex;
  align-items: center;
}

.field label {
  width: 78px;
}

.field input {
  width: 164px;
  height: 22px;
  padding-left: 5px;
  border: 1px solid #7d7d7d;
  background: #fff;
}

.field input:disabled {
  color: #b5b5b5;
}

.transfer {
  display: flex;
  gap: 10px;
}

.pick {
  flex: 1;
}

.movers {
  flex: 0 0 30px;
  display: flex;
  flex-direction: column;
  gap: 10px;
  padding-top: 146px;
}

.movers .apart {
  margin-top: 15px;
}

.actions {
  margin-top: auto;
  padding-right: 5px;
  display: flex;
  justify-content: flex-end;
  gap: 10px;
}

.actions .push {
  width: 75px;
  height: 22px;
}

.ok-wrap {
  position: relative;
}

/* red highlight frames */
.mark {
  position: absolute;
  border: 4px solid #f00;
  border-radius: 7px;
  pointer-events: none;
}

.mark-classes {
  left: 4px;
  right: 2px;
  top: 83px;
  height: 128px;
}

.mark-ok {
  inset: -4px;
}
```
